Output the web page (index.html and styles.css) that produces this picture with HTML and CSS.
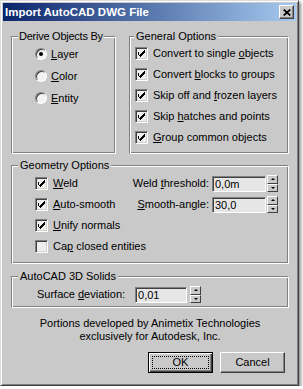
FILE: index.html
```html
<!DOCTYPE html>
<html lang="en">
<head>
  <meta charset="UTF-8">
  <meta name="viewport" content="width=device-width, initial-scale=1">
  <title>Import AutoCAD DWG File</title>
  <link rel="stylesheet" href="styles.css">
</head>
<body>
  <div class="window">
    <div class="titlebar">
      <span class="title">Import AutoCAD DWG File</span>
      <span class="close">
        <svg width="8" height="7" viewBox="0 0 8 7"><path d="M0.7 0.5 L7.3 6.5 M7.3 0.5 L0.7 6.5" stroke="#000" stroke-width="1.7" fill="none"/></svg>
      </span>
    </div>

    <div class="client">
      <div class="top-row">
        <fieldset class="group derive">
          <legend>Derive Objects By</legend>
          <div class="group-body">
            <div class="opt radio-row"><span class="radio on"></span><span><u>L</u>ayer</span></div>
            <div class="opt radio-row"><span class="radio"></span><span><u>C</u>olor</span></div>
            <div class="opt radio-row"><span class="radio"></span><span><u>E</u>ntity</span></div>
          </div>
        </fieldset>

        <fieldset class="group general">
          <legend>General Options</legend>
          <div class="group-body">
            <div class="opt"><span class="check on"></span><span>Convert to single <u>o</u>bjects</span></div>
            <div class="opt"><span class="check on"></span><span>Convert <u>b</u>locks to groups</span></div>
            <div class="opt"><span class="check on"></span><span>Skip off and <u>f</u>rozen layers</span></div>
            <div class="opt"><span class="check on"></span><span>Skip <u>h</u>atches and points</span></div>
            <div class="opt"><span class="check on"></span><span><u>G</u>roup common objects</span></div>
          </div>
        </fieldset>
      </div>

      <fieldset class="group geometry">
        <legend>Geometry Options</legend>
        <div class="group-body geo-grid">
          <div class="opt"><span class="check on"></span><span><u>W</u>eld</span></div>
          <div class="field"><span>Weld <u>t</u>hreshold:</span><input class="num" type="text" value="0,0m"><span class="spin"><i class="up"></i><i class="down"></i></span></div>
          <div class="opt"><span class="check on"></span><span><u>A</u>uto-smooth</span></div>
          <div class="field"><span><u>S</u>mooth-angle:</span><input class="num" type="text" value="30,0"><span class="spin"><i class="up"></i><i class="down"></i></span></div>
          <div class="opt"><span class="check on"></span><span><u>U</u>nify normals</span></div>
          <div></div>
          <div class="opt"><span class="check"></span><span>Ca<u>p</u> closed entities</span></div>
          <div></div>
        </div>
      </fieldset>

      <fieldset class="group solids">
        <legend>AutoCAD 3D Solids</legend>
        <div class="group-body field solids-row"><span class="solids-label">Surface <u>d</u>eviation:</span><input class="num short" type="text" value="0,01"><span class="spin"><i class="up"></i><i class="down"></i></span></div>
      </fieldset>

      <p class="credits">Portions developed by Animetix Technologies<br>exclusively for Autodesk, Inc.</p>

      <div class="buttons">
        <button class="btn default"><span class="focus">OK</span></button>
        <button class="btn">Cancel</button>
      </div>
    </div>
  </div>
</body>
</html>
```

FILE: styles.css
```css
body { margin: 0; background: #fff; font: 11px/13px "Liberation Sans", Arial, sans-serif; color: #000; }

.window { box-sizing: border-box; width: 299px; height: 386px; padding: 2px; background: #c9c9c9; border: 1px solid; border-color: #dcdcdc #404040 #404040 #dcdcdc; box-shadow: inset 1px 1px 0 #fff, inset -1px -1px 0 #808080, 2px 2px 3px rgba(0,0,0,0.45); }

.titlebar { height: 18px; display: flex; align-items: center; justify-content: space-between; padding: 0 2px; background: linear-gradient(to right, #0a246a, #a6caf0); color: #fff; font-weight: bold; font-size: 11.5px; }
.close { box-sizing: border-box; width: 15px; height: 14px; display: flex; align-items: center; justify-content: center; background: #c9c9c9; border: 1px solid; border-color: #fff #404040 #404040 #fff; box-shadow: inset -1px -1px 0 #808080; }

.client { padding: 9px 7px 0 8px; }

.top-row { display: flex; gap: 13px; }

.group { margin: 0; padding: 0; min-width: 0; border: 1px solid; border-color: #808080 #fff #fff #808080; box-shadow: inset 1px 1px 0 #fff, inset -1px -1px 0 #808080; }
.group legend { margin-left: 6px; padding: 0 2px; line-height: 13px; white-space: nowrap; background: #c9c9c9; }

.derive { box-sizing: border-box; width: 105px; flex: none; padding-bottom: 5px; }
.derive legend { padding: 0 1px; letter-spacing: -0.25px; }
.derive .group-body { padding-left: 23px; }
.general { flex: 1; padding-bottom: 5px; }
.general legend { margin-left: 4px; }
.general .group-body { padding-left: 5px; }

.opt { display: flex; align-items: center; gap: 5px; height: 21px; white-space: nowrap; }
.radio-row { height: 22px; gap: 4px; }

.check { box-sizing: border-box; width: 13px; height: 13px; flex: none; display: flex; align-items: center; justify-content: center; background: #eee; border: 1px solid; border-color: #808080 #fff #fff #808080; box-shadow: inset 1px 1px 0 #404040, inset -1px -1px 0 #d4d0c8; }
.check.on::after { content: ""; width: 7px; height: 7px; background: url("data:image/svg+xml,%3Csvg xmlns='http://www.w3.org/2000/svg' width='7' height='7'%3E%3Cpath d='M0 2h1v3h1V4h1V3h1V2h1V1h1V0h1v3H6v1H5v1H4v1H3v1H2V6H1V5H0z' fill='%23000'/%3E%3C/svg%3E") no-repeat; }

.radio { box-sizing: border-box; width: 12px; height: 12px; flex: none; border-radius: 50%; display: flex; align-items: center; justify-content: center; background: #f2f2f2; border: 1px solid; border-color: #808080 #fff #fff #808080; box-shadow: inset 1px 1px 0 #404040; }
.radio.on::after { content: ""; width: 4px; height: 4px; border-radius: 50%; background: #000; }

.geometry { margin-top: 5px; padding: 1px 10px 6px 0; }
.geo-grid { display: grid; grid-template-columns: minmax(0, 1fr) auto; grid-auto-rows: 21px; align-items: center; padding-left: 23px; }

.field { display: flex; align-items: center; justify-content: flex-end; white-space: nowrap; }
.field .num { margin-left: 3px; }
.field .spin { margin-left: 1px; }

.num { box-sizing: border-box; width: 54px; height: 16px; padding: 0 2px; margin: 0; font: inherit; color: #000; background: #e6e6e6; border: 1px solid; border-color: #808080 #fff #fff #808080; box-shadow: inset 1px 1px 0 #404040; outline: none; }
.num.short { width: 52px; }

.spin { box-sizing: border-box; width: 11px; height: 17px; display: flex; flex-direction: column; }
.spin i { flex: 1; display: flex; align-items: center; justify-content: center; background: #c9c9c9; border: 1px solid; border-color: #fff #404040 #404040 #fff; }
.spin i::after { content: ""; border-left: 2px solid transparent; border-right: 2px solid transparent; }
.spin .up::after { border-bottom: 2px solid #000; }
.spin .down::after { border-top: 2px solid #000; }

.solids { margin-top: 6px; padding: 3px 0 4px 0; }
.solids-row { justify-content: flex-start; padding-left: 25px; }
.solids-label { margin-right: 7px; }
.solids-row .spin { margin-left: 3px; }

.credits { margin: 9px 0 0; text-align: center; }

.buttons { display: flex; justify-content: flex-end; gap: 7px; margin: 9px 4px 0 0; }
.btn { box-sizing: border-box; width: 65px; height: 21px; padding: 0; font: inherit; color: #000; background: #c9c9c9; border: 1px solid; border-color: #fff #404040 #404040 #fff; box-shadow: inset -1px -1px 0 #808080; }
.btn.default { border-color: #000; box-shadow: inset 1px 1px 0 #fff, inset -1px -1px 0 #404040, inset -2px -2px 0 #808080; padding: 3px; }
.btn .focus { display: flex; align-items: center; justify-content: center; height: 100%; border: 1px dotted #000; box-sizing: border-box; }
```
